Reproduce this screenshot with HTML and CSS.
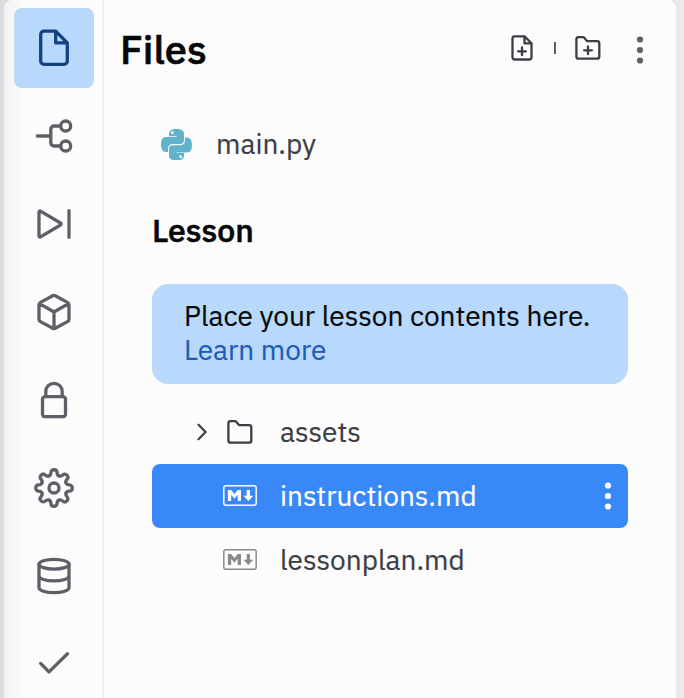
FILE: index.html
```html
<!DOCTYPE html>
<html lang="en">
<head>
<meta charset="utf-8">
<title>Files</title>
<link rel="stylesheet" href="styles.css">
</head>
<body>
<svg class="defs" aria-hidden="true">
  <symbol id="folder" viewBox="0 0 32 32"><path d="M6.6 5.2h4.2c.8 0 1.4.4 1.9 1L15 9.1h10.1c1.3 0 2.2.9 2.2 2.2v13.1c0 1.3-.9 2.2-2.2 2.2H6.6c-1.3 0-2.2-.9-2.2-2.2v-17c0-1.3.9-2.2 2.2-2.2z"/></symbol>
  <symbol id="markdown" viewBox="0 0 208 128"><rect x="5" y="5" width="198" height="118" rx="12" fill="none" stroke="currentColor" stroke-width="9"/><path fill="currentColor" d="M30 98V30h20l20 25 20-25h20v68H90V59L70 84 50 59v39zm125 0l-30-33h20V30h20v35h20z"/></symbol>
  <symbol id="kebab" viewBox="0 0 8 28"><circle cx="4" cy="3.5" r="3.1"/><circle cx="4" cy="14" r="3.1"/><circle cx="4" cy="24.5" r="3.1"/></symbol>
  <path id="tooth" d="M15 7.900C16.500 7.300 16.900 6.300 16.900 4.800C16.900.7 23.100.7 23.100 4.800C23.100 6.300 23.500 7.300 25 7.900"/>
  <path id="snake" d="M8 8V4.500C8 1.500 11 0 15.500 0S23 1.500 23 4.500V11.100a4 4 0 0 1-4 4h-7.500a4.500 4.500 0 0 0-4.500 4.500V23H5C1.500 23 0 20 0 15.500S1.500 8 5 8H15.700V7.300H8zM11.300 2.300a1.400 1.400 0 1 0 .01 2.800a1.400 1.400 0 1 0-.01-2.800z" fill-rule="evenodd"/>
</svg>
<div class="panel">
  <nav class="rail">
    <a class="tool active"><svg viewBox="0 0 40 40"><path d="M21.700 3.100H10a3.300 3.300 0 0 0-3.300 3.300v26.700a3.300 3.300 0 0 0 3.300 3.300h20a3.300 3.300 0 0 0 3.300-3.300V14.800L21.700 3.100V14.800H33.300"/></svg></a>
    <a class="tool"><svg viewBox="0 0 40 40"><path d="M3.300 20H16.800M26.700 10H20.100a3.300 3.300 0 0 0-3.300 3.300v13.400a3.300 3.300 0 0 0 3.300 3.300h6.600"/><circle cx="31.700" cy="10" r="5"/><circle cx="31.700" cy="30" r="5"/></svg></a>
    <a class="tool"><svg viewBox="0 0 40 40"><path d="M5 8v24c0 .9.700 1.300 1.500.8l20-11.800c.8-.5.8-1.500 0-2L6.500 7.200C5.700 6.700 5 7.100 5 8zM35 6.700v26.600"/></svg></a>
    <a class="tool"><svg viewBox="0 0 40 40"><path d="M18.700 3.800a2.800 2.800 0 0 1 2.600 0l12.200 6.600c1 .6 1.500 1.300 1.500 2.400v14.400c0 1.100-.5 1.900-1.500 2.400l-12.200 6.600a2.800 2.800 0 0 1-2.600 0L6.500 29.600c-1-.5-1.500-1.300-1.500-2.400V12.800c0-1.100.5-1.800 1.500-2.400zM5.500 11.600L20 20l14.500-8.400M20 20v16.500"/></svg></a>
    <a class="tool"><svg viewBox="0 0 40 40"><rect x="8.500" y="16.700" width="23" height="20" rx="2.500"/><path d="M11.800 16.500V11.500a8.200 8.200 0 0 1 16.400 0v5"/></svg></a>
    <a class="tool"><svg viewBox="0 0 40 40"><circle cx="20" cy="20" r="5"/><use href="#tooth"/><use href="#tooth" transform="rotate(45 20 20)"/><use href="#tooth" transform="rotate(90 20 20)"/><use href="#tooth" transform="rotate(135 20 20)"/><use href="#tooth" transform="rotate(180 20 20)"/><use href="#tooth" transform="rotate(225 20 20)"/><use href="#tooth" transform="rotate(270 20 20)"/><use href="#tooth" transform="rotate(315 20 20)"/></svg></a>
    <a class="tool"><svg viewBox="0 0 40 40"><ellipse cx="20" cy="8.200" rx="15" ry="4.900"/><path d="M5 8.200v23.600c0 2.700 6.700 4.900 15 4.900s15-2.200 15-4.900V8.200M5 20c0 2.700 6.700 4.900 15 4.900S35 22.700 35 20"/></svg></a>
    <a class="tool"><svg viewBox="0 0 40 40"><path d="M6.600 19.400L15 27.900L33.500 9.700"/></svg></a>
  </nav>
  <main class="files">
    <header class="head">
      <h1>Files</h1>
      <svg class="icon" viewBox="0 0 32 32"><path d="M18.500 4.300H8.700a2.200 2.200 0 0 0-2.200 2.200v18.800a2.200 2.200 0 0 0 2.200 2.200h14.600a2.200 2.200 0 0 0 2.200-2.200V11.300L18.500 4.300v7h7M16 15.400v7.800M12.100 19.300h7.800"/></svg>
      <span class="divider"></span>
      <svg class="icon" viewBox="0 0 32 32"><use href="#folder"/><path d="M16 14.400v7.800M12.100 18.300h7.800"/></svg>
      <svg class="kebab"><use href="#kebab"/></svg>
    </header>
    <div class="row root">
      <svg class="python" viewBox="0 0 31 31.400"><use href="#snake"/><use href="#snake" transform="rotate(180 15.500 15.700)"/></svg>
      <span>main.py</span>
    </div>
    <h2>Lesson</h2>
    <div class="note"><p>Place your lesson contents here.</p><a>Learn more</a></div>
    <div class="row"><svg class="icon chevron" viewBox="0 0 32 32"><path d="M12.500 8.800L19.600 16l-7.100 7.200"/></svg><svg class="icon folder"><use href="#folder"/></svg><span>assets</span></div>
    <div class="row file selected"><svg class="md"><use href="#markdown"/></svg><span>instructions.md</span><svg class="kebab"><use href="#kebab"/></svg></div>
    <div class="row file"><svg class="md"><use href="#markdown"/></svg><span>lessonplan.md</span></div>
  </main>
</div>
</body>
</html>
```
FILE: styles.css
```css
* { box-sizing: border-box; }
body {
  margin: 0;
  height: 698px;
  overflow: hidden;
  padding: 0 8px 0 4px;
  background: linear-gradient(90deg, #d8dadd 0, #dcdee1 4px, #e8e9eb 676px, #eaebed 684px);
  font-family: "IBM Plex Sans", Roboto, sans-serif;
  font-size: 28px;
  color: #3c3e46;
  -webkit-text-stroke: 0.2px currentColor;
}
h1, h2, p { margin: 0; }
svg { display: block; flex: none; }
.defs { position: absolute; width: 0; height: 0; }
.panel {
  display: flex;
  height: 698px;
  border-radius: 8px 8px 0 0;
  background: linear-gradient(90deg, #f3f3f4 0, #fcfcfc 24px);
}
.rail {
  width: 100px;
  flex: none;
  padding: 8px 8px 0 10px;
  display: flex;
  flex-direction: column;
  gap: 8px;
  border-right: 2px solid #f0f0f2;
}
.tool {
  width: 80px;
  height: 80px;
  flex: none;
  display: grid;
  place-items: center;
  border-radius: 8px;
}
.tool svg {
  width: 40px;
  height: 40px;
  overflow: visible;
  fill: none;
  stroke: #5f6067;
  stroke-width: 3.3;
  stroke-linecap: round;
  stroke-linejoin: round;
}
.active { background: #b8d9fb; }
.active svg { stroke: #134182; }
.files { flex: 1; padding: 0 48px; }
.head {
  display: flex;
  align-items: center;
  height: 96px;
  margin: 0 -20px 0 -32px;
}
h1, h2 {
  font-weight: 500;
  color: #07080a;
  -webkit-text-stroke: 0.6px currentColor;
}
h1 {
  flex: 1;
  padding-top: 1px;
  font-size: 40px;
  line-height: 48px;
}
.icon {
  width: 32px;
  height: 32px;
  fill: none;
  stroke: #3c3e46;
  stroke-width: 2.3;
  stroke-linecap: round;
  stroke-linejoin: round;
}
.divider { width: 2px; height: 12px; margin: 0 16px; background: #5f6067; }
.kebab { width: 8px; height: 28px; fill: currentColor; }
.head .kebab { margin: 4px 4px 0 32px; color: #5f6067; }
.row {
  display: flex;
  align-items: center;
  height: 64px;
  line-height: 36px;
  border-radius: 8px;
  white-space: nowrap;
}
.root { height: 96px; padding-left: 9px; }
.python { width: 31px; height: 31.4px; margin: 1px 24px 0 0; fill: #60b3cb; }
h2 {
  height: 92px;
  padding-top: 18px;
  font-size: 32px;
  line-height: 40px;
}
.note {
  height: 100px;
  margin-bottom: 16px;
  padding: 15px 32px;
  border-radius: 16px;
  background: #b8d9fb;
  line-height: 34px;
  color: #07080a;
  white-space: nowrap;
}
.note a { color: #1f5cb8; }
.chevron { margin-left: 34px; }
.folder { margin: 0 24px 0 6px; }
.file { padding: 0 16px 0 71px; }
.md { width: 34px; height: 21px; margin: 0 23px 1px 0; color: #8a8a8a; }
.selected { background: #3888f7; color: #fff; }
.selected .md { color: #fff; }
.selected .kebab { margin-left: auto; }
```
